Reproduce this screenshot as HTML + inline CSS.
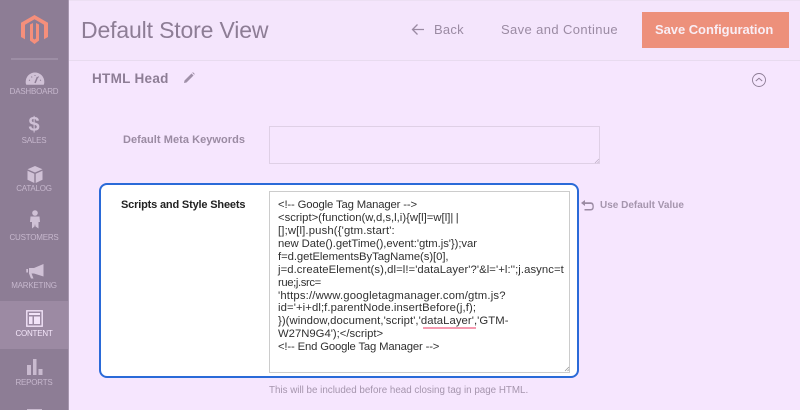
<!DOCTYPE html>
<html><head><meta charset="utf-8"><style>
html,body{margin:0;padding:0;width:800px;height:410px;overflow:hidden;background:#f6e6fe;font-family:"Liberation Sans",sans-serif}
#w{position:absolute;left:0;top:0;width:800px;height:410px;overflow:hidden;filter:blur(.25px)}
.a{position:absolute;white-space:pre}
#side{position:absolute;left:0;top:0;width:68px;height:410px;background:#8d7d95;border-right:1px solid #a797af}
.nav{position:absolute;left:0;width:68px;text-align:center;font-size:8px;line-height:10px;letter-spacing:-.22px;color:#c6b7cd}
.ta div{position:absolute;left:278px;white-space:pre;font-size:11.3px;color:#303030;line-height:13px}
</style></head><body><div id="w">
<div class="a" style="left:69px;top:0;width:731px;height:61px;background:#f4e5fc;border-top:1px solid #ecdff3;border-bottom:1px solid #e8dbef;box-sizing:border-box"></div>
<div id="side"></div>
<div class="a" style="left:0;top:301px;width:68px;height:48px;background:#9c8aa3"></div>
<div class="a" style="left:11px;top:58px;width:47px;height:2px;background:#9d8ea5"></div>
<svg class="a" style="left:21px;top:15px" width="27" height="29" viewBox="0 0 27 29"><path d="M13.5 0L27 7.800V22L23 24.300V9.800L13.500 4.300L4 9.800V24.300L0 22V7.800Z M9 9.500L12 8V23.500L13.500 24.500L15 23.500V8L18 9.500V25.500L13.500 29L9 25.500Z" fill="#f58f7b"/></svg>

<svg class="a" style="left:25px;top:72px" width="20" height="13" viewBox="0 0 20 13"><path d="M10 0.500A9.300 9.300 0 0 0 .7 10c0 1 .2 2 .6 2.700H18.700c.4-.7.6-1.700.6-2.700A9.300 9.300 0 0 0 10 .5Z" fill="#d0c1d6"/><path d="M10 11L12.500 5" stroke="#8d7d95" stroke-width="1.500"/><path d="M4 8L5 8.500M6.500 4.500L7 5.500M13.500 4.500L13 5.500M16 8L15 8.500M10 3V4" stroke="#8d7d95" stroke-width="1"/></svg>
<div class="nav" style="top:87px">DASHBOARD</div>
<div class="a" style="left:0;width:68px;text-align:center;top:114px;font-size:20px;line-height:23px;font-weight:bold;color:#cfc0d6">$</div>
<div class="nav" style="top:136px">SALES</div>
<svg class="a" style="left:27px;top:166px" width="16" height="17" viewBox="0 0 16 17"><path d="M8 0L15.500 3.300L8 6.500L.5 3.300ZM.5 4.800L7.300 7.700V17L.5 13.800ZM15.500 4.800L8.700 7.700V17L15.500 13.800Z" fill="#d0c1d6"/></svg>
<div class="nav" style="top:184px">CATALOG</div>
<svg class="a" style="left:29px;top:210px" width="12" height="19" viewBox="0 0 12 19"><circle cx="6" cy="3" r="2.800" fill="#d0c1d6"/><path d="M1.500 6.500H10.500L11 12H9.500V18.500L6.500 16.500L6 14L5.500 16.500L3 18.500V12H1Z" fill="#d0c1d6"/></svg>
<div class="nav" style="top:233px">CUSTOMERS</div>
<svg class="a" style="left:26px;top:264px" width="18" height="15" viewBox="0 0 18 15"><path d="M17.500 0V12.500L8 9.500H5.500L7.500 14.500H5L3 9.500V4H8ZM.3 5H2V8.500H.3Z" fill="#d0c1d6"/></svg>
<div class="nav" style="top:281px">MARKETING</div>
<svg class="a" style="left:26px;top:310px" width="17" height="17" viewBox="0 0 17 17"><path d="M.8.800H16.200V16.200H.8Z" fill="none" stroke="#f2e3f8" stroke-width="1.400"/><path d="M3 3H14V5H3ZM3 6.500H6.500V14H3ZM8 6.500H14V14H8Z" fill="#f2e3f8"/></svg>
<div class="nav" style="top:329px;color:#f4e6fa">CONTENT</div>
<svg class="a" style="left:27px;top:359px" width="16" height="16" viewBox="0 0 16 16"><path d="M0 6H4V16H0ZM6 0H9.500V16H6ZM11.500 10H15.500V16H11.500Z" fill="#c9bacf"/></svg>
<div class="nav" style="top:378px">REPORTS</div>
<div class="a" style="left:27px;top:409px;width:15px;height:1px;background:#c9bacf"></div>

<div class="a" style="left:81px;top:15px;font-size:23px;line-height:30px;color:#8d7d95;letter-spacing:-.15px">Default Store View</div>
<svg class="a" style="left:411px;top:23px" width="14" height="13" viewBox="0 0 14 13"><path d="M13 6.500H2M6.500 1.500L1.500 6.500L6.500 11.500" fill="none" stroke="#9b8ba3" stroke-width="1.300"/></svg>
<div class="a" style="left:434px;top:22px;font-size:13px;line-height:16px;color:#9b8ba3;letter-spacing:.25px">Back</div>
<div class="a" style="left:501px;top:22px;font-size:13px;line-height:16px;color:#9b8ba3;letter-spacing:.38px">Save and Continue</div>
<div class="a" style="left:642px;top:12px;width:147px;height:36px;background:#ed907b"></div>
<div class="a" style="left:655px;top:22px;font-size:13px;line-height:16px;color:#f9eef5;letter-spacing:-.05px;font-weight:bold">Save Configuration</div>

<div class="a" style="left:92px;top:71px;font-size:13.500px;line-height:16px;color:#8d7d95;font-weight:bold;letter-spacing:.3px">HTML Head</div>
<svg class="a" style="left:183px;top:72px" width="12" height="12" viewBox="0 0 12 12"><path d="M1 11L1.500 8.500L8.500 1.500L10.500 3.500L3.500 10.500ZM9.200.8L10 .2L11.800 2L11.200 2.800Z" fill="#a090a8"/></svg>
<svg class="a" style="left:751px;top:72px" width="16" height="16" viewBox="0 0 16 16"><circle cx="8" cy="8" r="6.500" fill="none" stroke="#8d7d95" stroke-width=".9"/><path d="M4.800 9L8 6.300L11.200 9" fill="none" stroke="#8d7d95" stroke-width="1"/></svg>

<div class="a" style="left:123px;top:133px;font-size:11px;line-height:14px;font-weight:bold;color:#9b8ba3;letter-spacing:.05px">Default Meta Keywords</div>
<div class="a" style="left:269px;top:126px;width:331px;height:38px;box-sizing:border-box;border:1px solid #dfd0e6"></div>
<svg class="a" style="left:594px;top:158px" width="6" height="6" viewBox="0 0 6 6"><path d="M1 5L5 1M3.500 5L5 3.500" stroke="#bfb0c6" stroke-width=".8"/></svg>

<div class="a" style="left:99px;top:183px;width:480px;height:195px;box-sizing:border-box;background:#fff;border:2px solid #2a6ad8;border-radius:8px"></div>
<div class="a" style="left:121px;top:198px;font-size:11px;line-height:14px;font-weight:bold;color:#222;letter-spacing:-.17px">Scripts and Style Sheets</div>
<div class="a" style="left:269px;top:191px;width:301px;height:182px;box-sizing:border-box;border:1px solid #ccc"></div>
<svg class="a" style="left:564px;top:366px" width="6" height="6" viewBox="0 0 6 6"><path d="M1 5L5 1M3.500 5L5 3.500" stroke="#999" stroke-width=".8"/></svg>
<div class="ta">
<div style="top:199px;letter-spacing:-.15px">&lt;!-- Google Tag Manager --&gt;</div>
<div style="top:212px">&lt;script&gt;(function(w,d,s,l,i){w[l]=w[l]<span style="letter-spacing:2.5px">||</span></div>
<div style="top:225px;letter-spacing:.15px">[];w[l].push({'gtm.start':</div>
<div style="top:238px;letter-spacing:-.05px">new Date().getTime(),event:'gtm.js'});var</div>
<div style="top:251px;letter-spacing:-.06px">f=d.getElementsByTagName(s)[0],</div>
<div style="top:264px;letter-spacing:.07px">j=d.createElement(s),dl=l!='dataLayer'?'&amp;l='+l:'';j.async=t</div>
<div style="top:277px;letter-spacing:-.4px">rue;j.src=</div>
<div style="top:290px;letter-spacing:.17px">'https://www.googletagmanager.com/gtm.js?</div>
<div style="top:302px;letter-spacing:.1px">id='+i+dl;f.parentNode.insertBefore(j,f);</div>
<div style="top:315px;letter-spacing:.07px">})(window,document,'script','dataLayer','GTM-</div>
<div style="top:328px">W27N9G4');&lt;/script&gt;</div>
<div style="top:341px;letter-spacing:-.16px">&lt;!-- End Google Tag Manager --&gt;</div>
</div>
<div class="a" style="left:423px;top:327px;width:53px;height:2px;background:#f59ab0"></div>

<svg class="a" style="left:580px;top:199px" width="14" height="12" viewBox="0 0 14 12"><path d="M5 1L1 4L5 7V5H10.500C12 5 12.500 6 12.500 7.500S12 10 10.500 10H4.500V11.500H10.500C13 11.500 13.800 10 13.800 7.500S13 3.300 10.500 3.300H5Z" fill="#9b8ba3"/></svg>
<div class="a" style="left:600px;top:199px;font-size:10px;line-height:13px;font-weight:bold;color:#a595ad">Use Default Value</div>
<div class="a" style="left:269px;top:384px;font-size:9.800px;line-height:13px;color:#a595ad">This will be included before head closing tag in page HTML.</div>
</div></body></html>
